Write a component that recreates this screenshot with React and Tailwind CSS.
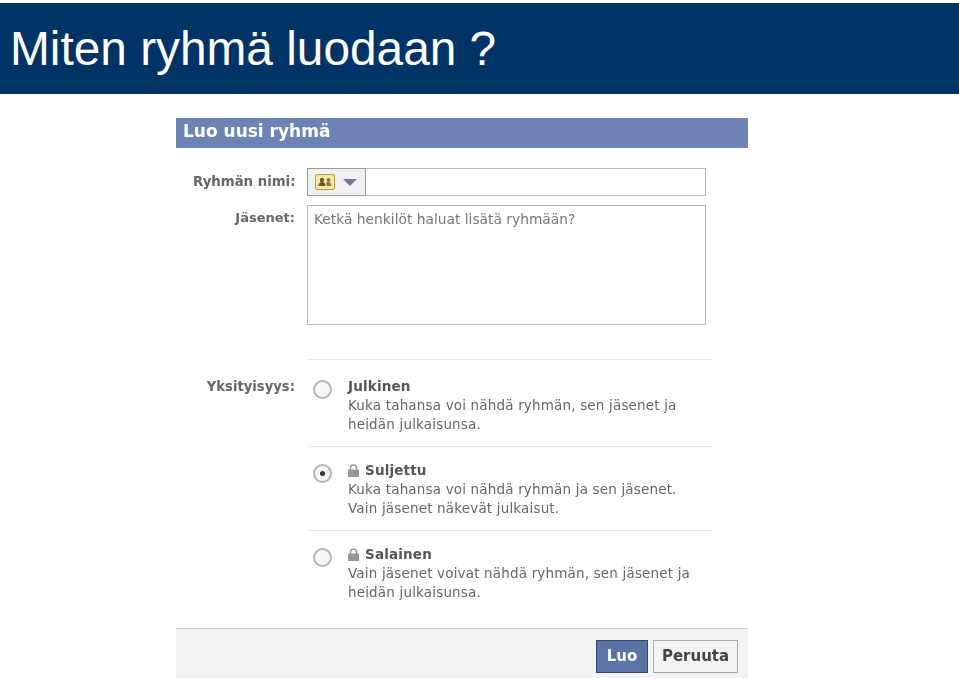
import React from 'react';

const font = { fontFamily: '"DejaVu Sans", sans-serif' };

const LockIcon = () => (
  <svg width="11" height="13" viewBox="0 0 11 13" className="shrink-0">
    <path d="M2.5 6V4a3 3 0 0 1 6 0v2" fill="none" stroke="#9a9a9a" strokeWidth="1.5" />
    <rect x="0" y="5.5" width="11" height="7.5" rx="0.5" fill="#969696" />
  </svg>
);

const Radio = ({ checked }) => (
  <div className="w-[19px] h-[19px] rounded-full border-2 border-[#b5b5b5] bg-[#f7f7f7] flex items-center justify-center shrink-0">
    {checked && <div className="w-[5px] h-[5px] rounded-full bg-[#333]" />}
  </div>
);

const PrivacyOption = ({ title, locked, checked, lines }) => (
  <div className="flex pl-[6px]">
    <div className="w-[35px] pt-[3px]">
      <Radio checked={checked} />
    </div>
    <div className="text-[13.5px] leading-[18.5px] text-[#666] tracking-[0.17px] whitespace-nowrap">
      <div className="flex items-center gap-[6px] h-[19px] font-bold text-[#555]">
        {locked && <LockIcon />}
        <span>{title}</span>
      </div>
      {lines.map((l) => (
        <div key={l}>{l}</div>
      ))}
    </div>
  </div>
);

export default function App() {
  return (
    <div className="w-[959px] h-[679px] bg-white overflow-hidden pt-[3px]">
      <div className="h-[91px] bg-[#003366] pl-[10px] pt-[17px] text-white text-[47.8px] leading-[58px] whitespace-nowrap" style={{ fontFamily: '"Liberation Sans", sans-serif' }}>
        Miten ryhmä luodaan ?
      </div>

      <div className="w-[572px] ml-[176px] mt-[24px] blur-[0.4px]" style={font}>
        <div className="h-[30px] bg-[#6d84b4] pl-[7px] flex items-center text-white font-bold text-[17px] pb-[3px]">
          Luo uusi ryhmä
        </div>

        <div className="flex mt-[20px] pl-[17px]">
          <div className="w-[102px] text-right text-[13.3px] font-bold text-[#666] leading-[28px] whitespace-nowrap">Ryhmän nimi:</div>
          <div className="ml-[12px] w-[399px] h-[28px] border border-[#b9b9b9] flex">
            <div className="w-[59px] -ml-px -mt-px h-[28px] border border-[#9a9a9a] bg-[#f0f0f0] flex items-center pl-[7px] gap-[8px]">
              <svg width="20" height="16" viewBox="0 0 20 16">
                <rect x="0.5" y="0.5" width="19" height="15" rx="1.5" fill="#f8e7a8" stroke="#b49a4c" />
                <circle cx="7" cy="6" r="2.2" fill="#6b5a24" />
                <path d="M3.5 12c0-3 1.5-4 3.5-4s3.5 1 3.5 4z" fill="#6b5a24" />
                <circle cx="13.5" cy="6" r="2" fill="#8c7a3c" />
                <path d="M11 8.5c2-1 5.5-.8 5.5 3.5h-4.5z" fill="#8c7a3c" />
              </svg>
              <svg width="14" height="7" viewBox="0 0 14 7">
                <path d="M0 0h14L7 7z" fill="#6f7b99" />
              </svg>
            </div>
          </div>
        </div>

        <div className="flex mt-[9px] pl-[17px]">
          <div className="w-[102px] text-right text-[13px] font-bold text-[#666] leading-[26px] whitespace-nowrap">Jäsenet:</div>
          <div className="ml-[12px] w-[399px] h-[120px] border border-[#b9b9b9] pl-[6px] pt-[3px] text-[13.8px] leading-[20px] text-[#777] whitespace-nowrap">
            Ketkä henkilöt haluat lisätä ryhmään?
          </div>
        </div>

        <div className="flex mt-[34px] pl-[17px]">
          <div className="w-[102px] pt-[18px] text-right text-[13.2px] font-bold text-[#666] leading-[20px] whitespace-nowrap">Yksityisyys:</div>
          <div className="ml-[12px] w-[405px] border-t border-[#e8e8e8]">
            <div className="h-[87px] pt-[17px] border-b border-[#e6e6e6]">
              <PrivacyOption
                title="Julkinen"
                lines={['Kuka tahansa voi nähdä ryhmän, sen jäsenet ja', 'heidän julkaisunsa.']}
              />
            </div>
            <div className="h-[84px] pt-[14px] border-b border-[#e6e6e6]">
              <PrivacyOption
                title="Suljettu"
                locked
                checked
                lines={['Kuka tahansa voi nähdä ryhmän ja sen jäsenet.', 'Vain jäsenet näkevät julkaisut.']}
              />
            </div>
            <div className="h-[83px] pt-[14px]">
              <PrivacyOption
                title="Salainen"
                locked
                lines={['Vain jäsenet voivat nähdä ryhmän, sen jäsenet ja', 'heidän julkaisunsa.']}
              />
            </div>
          </div>
        </div>

        <div className="mt-[14px] h-[50px] bg-[#f2f2f2] border-t border-[#cfcfcf] flex justify-end items-start pt-[11px] pr-[10px] gap-[5px] font-bold text-[15px]">
          <button className="w-[52px] h-[33px] bg-[#5b74a8] border border-[#2f477a] text-white">Luo</button>
          <button className="w-[85px] h-[33px] bg-[#f2f2f2] border border-[#a8a8a8] text-[#444]">Peruuta</button>
        </div>
      </div>
    </div>
  );
}
